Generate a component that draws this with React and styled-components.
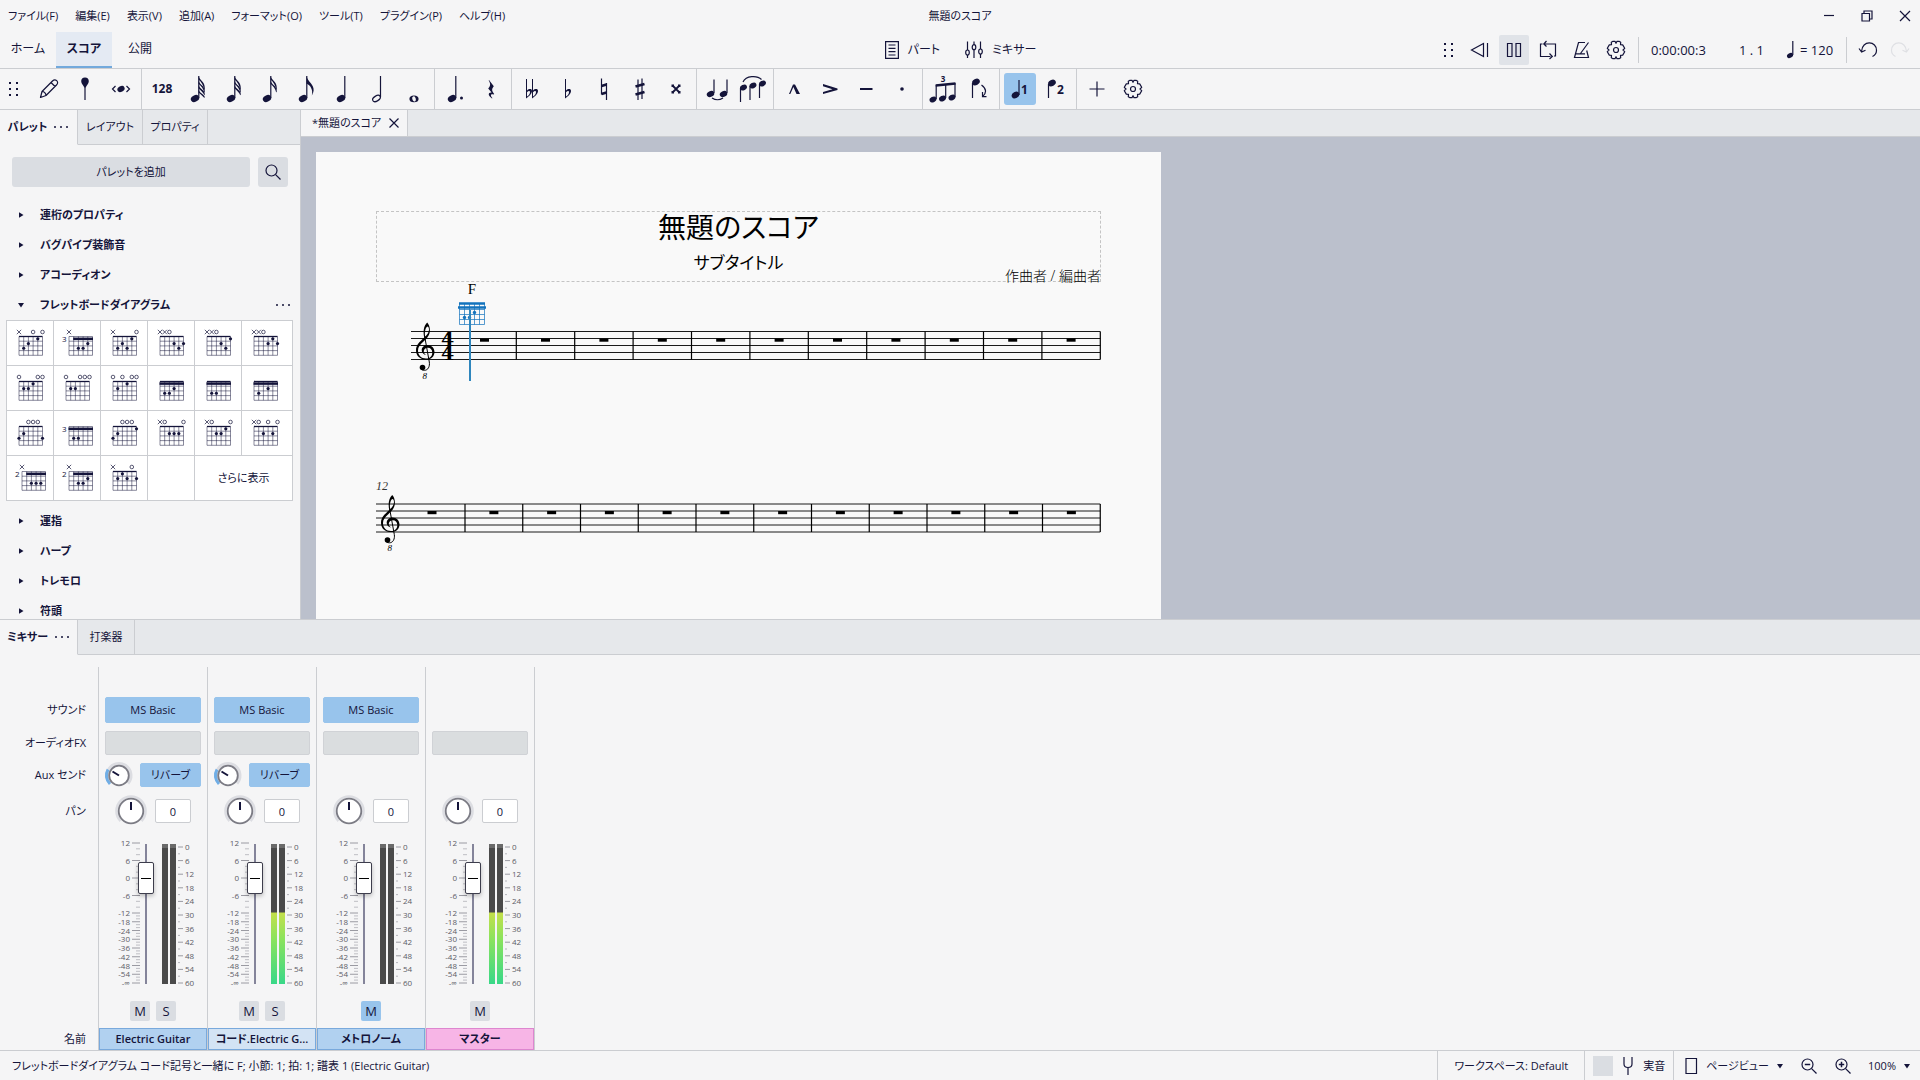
import React from 'react';
import styled, { createGlobalStyle, css } from 'styled-components';

const ink = '#14143a';
const line = '#cbcdd1';
const panel = '#f5f5f6';
const strip = '#e6e8eb';
const control = '#dadde2';
const accent = '#98c4ec';

const GlobalStyle = createGlobalStyle`
  * {
    box-sizing: border-box;
  }

  body {
    margin: 0;
    background: ${panel};
    color: ${ink};
    font-family: 'Open Sans', 'Noto Sans CJK JP', sans-serif;
    font-size: 11px;
    line-height: 16px;
    font-feature-settings: 'palt';
  }

  button,
  input {
    font: inherit;
    font-feature-settings: inherit;
    color: inherit;
    margin: 0;
    padding: 0;
    border: 0;
    background: none;
  }

  svg {
    display: block;
    flex: none;
    overflow: visible;
  }
`;

/* ---------- icons ---------- */

const Icon = ({ size = 32, width, children, ...rest }) => (
  <svg
    width={width || size}
    height={size}
    viewBox={`0 0 ${width || size} ${size}`}
    fill="none"
    stroke="currentColor"
    strokeWidth="1.2"
    aria-hidden="true"
    {...rest}
  >
    {children}
  </svg>
);

const Head = ({ x, y, rx = 4.4, ry = 3.2 }) => (
  <ellipse cx={x} cy={y} rx={rx} ry={ry} transform={`rotate(-28 ${x} ${y})`} fill="currentColor" stroke="none" />
);

const FlaggedNote = ({ flags }) => (
  <Icon>
    <Head x={13} y={25.5} />
    <path d="M16.8 3V25" />
    {Array.from({ length: flags }, (_, i) => (
      <path
        key={i}
        fill="currentColor"
        stroke="none"
        d={
          flags === 1
            ? 'M16.5 3C17.5 8.5 24.3 11.5 23.6 17.5C23.3 20 22.3 21.5 21.8 22.5C23.2 17.5 21 12.5 16.5 10.5Z'
            : `M16.5 ${3 + i * 4.4}C17.5 ${7.5 + i * 4.4} 23 ${8 + i * 4.4} 22.8 ${15.5 + i * 3}L22.2 ${17 + i * 2.6}C21.5 ${12 + i * 4} 19.5 ${9 + i * 4.4} 16.5 ${6.4 + i * 4.4}Z`
        }
      />
    ))}
  </Icon>
);

const Quarter = () => (
  <Icon>
    <Head x={15} y={25.5} />
    <path d="M18.8 3V25" />
  </Icon>
);

const Half = () => (
  <Icon>
    <ellipse cx="14.5" cy="25.5" rx="4.2" ry="2.5" transform="rotate(-32 14.5 25.5)" />
    <path d="M18.5 3V24" />
  </Icon>
);

const Whole = () => (
  <Icon>
    <path
      fill="currentColor"
      stroke="none"
      fillRule="evenodd"
      d="M16 22.6C19 22.6 20.6 24 20.6 26S19 29.3 16 29.3S11.4 28 11.4 26S13 22.6 16 22.6ZM15.3 23.4C13.9 23.6 14 25.6 14.7 27S16.5 28.8 17.3 28.2S18 25.7 17.3 24.6S16.2 23.2 15.3 23.4Z"
    />
  </Icon>
);

const Dotted = () => (
  <Icon>
    <Head x={13} y={25.5} />
    <path d="M16.8 3V25" />
    <circle cx="22.5" cy="25" r="1.5" fill="currentColor" stroke="none" />
  </Icon>
);

const QuarterRest = () => (
  <Icon>
    <path
      fill="currentColor"
      stroke="none"
      d="M14 7L18.8 13.2C16.5 16 16.6 17.6 19.2 21L18.8 21.5C16 20.4 14.8 22 17.4 25L17 25.5C12.5 22.5 13 19.2 16.6 19.6L13.2 15.4C15.8 12.5 15.6 10.5 13.7 7.4Z"
    />
  </Icon>
);

const flatShape = 'M0 0V19.5C3 17.5 6 14.5 6 12C6 9.5 3 9.5 1 11.5V0ZM1 13.2C2.5 11.5 4 11.6 4 13.2C4 15 2.5 16.5 1 17.6Z';

const Flat = () => (
  <Icon>
    <path transform="translate(13 6)" d={flatShape} fill="currentColor" stroke="none" fillRule="evenodd" />
  </Icon>
);

const DoubleFlat = () => (
  <Icon>
    <path transform="translate(10 6)" d={flatShape} fill="currentColor" stroke="none" fillRule="evenodd" />
    <path transform="translate(16 6)" d={flatShape} fill="currentColor" stroke="none" fillRule="evenodd" />
  </Icon>
);

const Natural = () => (
  <Icon>
    <path d="M13.5 5.500V21.500M18.500 10V27" />
    <path d="M13.500 13L18.500 11.500M13.500 21L18.500 19.500" strokeWidth="2.6" />
  </Icon>
);

const Sharp = () => (
  <Icon>
    <path d="M14 6.500V27M18 5.500V26" />
    <path d="M11.500 13.500L20.500 11M11.500 21.500L20.500 19" strokeWidth="2.6" />
  </Icon>
);

const DoubleSharp = () => (
  <Icon>
    <path d="M12.500 12.500L19.500 19.500M19.500 12.500L12.500 19.500" strokeWidth="1.8" />
    <path
      d="M11.500 11.500h2.500v2.500h-2.500zM18 11.500h2.500v2.500h-2.500zM11.500 18h2.500v2.500h-2.500zM18 18h2.500v2.500h-2.500z"
      fill="currentColor"
      stroke="none"
    />
  </Icon>
);

const Tie = () => (
  <Icon>
    <Head x={9.5} y={21} rx={3.9} ry={2.9} />
    <Head x={22.5} y={21} rx={3.9} ry={2.9} />
    <path d="M13 6.500V20M26 6.500V20M11 25Q16.500 28.500 22 25" />
  </Icon>
);

const Slur = () => (
  <Icon>
    <Head x={6.5} y={14.5} rx={3.6} ry={2.7} />
    <Head x={16} y={12.5} rx={3.6} ry={2.7} />
    <Head x={25.5} y={10.5} rx={3.6} ry={2.7} />
    <path d="M3.500 15V29M13 13V27M22.500 11V25M6 9C9 2.500 20 2 24.500 6.500" />
  </Icon>
);

const Marcato = () => (
  <Icon>
    <path d="M11 21L15 11.500H17L22 21H18.500L15.400 14L12.300 21Z" fill="currentColor" stroke="none" />
  </Icon>
);

const Accent = () => (
  <Icon>
    <path d="M9 11L23.500 15.500V17L9 21V19L18.500 16.200L9 13.200Z" fill="currentColor" stroke="none" />
  </Icon>
);

const Tenuto = () => (
  <Icon>
    <path d="M10 16H22.500" strokeWidth="2" />
  </Icon>
);

const Staccato = () => (
  <Icon>
    <circle cx="16" cy="16" r="1.8" fill="currentColor" stroke="none" />
  </Icon>
);

const Triplet = () => (
  <Icon>
    <Head x={6} y={26.5} rx={3.6} ry={2.7} />
    <Head x={15.5} y={25.5} rx={3.6} ry={2.7} />
    <Head x={25} y={24.5} rx={3.6} ry={2.7} />
    <path d="M9.200 12V26M18.700 11V25M28 10V24" />
    <path d="M8.700 12.500L28.500 10.500" strokeWidth="2.4" />
    <text x="16" y="9" fontSize="8" textAnchor="middle" fill="currentColor" stroke="none">
      3
    </text>
  </Icon>
);

const Flip = () => (
  <Icon>
    <Head x={13} y={9} rx={4} ry={3} />
    <path d="M9.500 10V25M18.500 12C24 16 23.500 20 19.500 23.500M19.500 19V23.700H23.500" />
  </Icon>
);

const VoiceOne = () => (
  <Icon>
    <Head x={11.5} y={22} rx={4} ry={3} />
    <path d="M15 7V22" />
    <text x="17" y="20.5" fontSize="12" fontWeight="700" fill="currentColor" stroke="none">
      1
    </text>
  </Icon>
);

const VoiceTwo = () => (
  <Icon>
    <Head x={12} y={10} rx={4} ry={3} />
    <path d="M8.500 11V25" />
    <text x="17" y="20.5" fontSize="12" fontWeight="700" fill="currentColor" stroke="none">
      2
    </text>
  </Icon>
);

const Grip = () => (
  <Icon size={16} width={12}>
    {[2, 8, 14].map((y) => (
      <path key={y} d={`M1 ${y}h2M8 ${y}h2`} strokeWidth="2" />
    ))}
  </Icon>
);

const Pencil = () => (
  <Icon strokeLinejoin="round">
    <path d="M7.500 24.500L9 18.500L19.500 8C21 6.500 22.500 6.500 23.700 7.700S25 10.500 23.500 12L13 22.500L7.500 24.500ZM9 18.500C11 18.300 13 20.300 13 22.500M18 9.500L22 13.500" />
  </Icon>
);

const Pin = () => (
  <Icon>
    <path
      d="M16 4.500C18.500 4.500 19.800 6 19.800 8.200C19.800 11 17.500 12 16.700 14.500H15.300C14.500 12 12.200 11 12.200 8.200C12.200 6 13.500 4.500 16 4.500Z"
      fill="currentColor"
      stroke="none"
    />
    <path d="M16 12V27" />
  </Icon>
);

const Repitch = () => (
  <Icon>
    <Head x={16} y={16} rx={3.8} ry={2.8} />
    <path d="M10.500 13L7.500 16L10.500 19M21.500 13L24.500 16L21.500 19" />
  </Icon>
);

const Gear = () => (
  <Icon size={20} strokeLinejoin="round">
    <path d="M7 1.300H9L10 3.300L11 1.300H13L14.700 2.300L14.500 4.700L16.700 4.900L18.700 8.300L17 10L18.700 11.700L16.700 15.100L14.500 15.300L14.700 17.700L13 18.700H11L10 16.700L9 18.700H7L5.300 17.700L5.500 15.300L3.300 15.100L1.300 11.700L3 10L1.300 8.300L3.300 4.900L5.500 4.700L5.300 2.300Z" />
    <circle cx="10" cy="10" r="2.5" />
  </Icon>
);

const Plus = () => (
  <Icon>
    <path d="M8.500 16H23.500M16 8.500V23.500" />
  </Icon>
);

const PartsIcon = () => (
  <Icon size={20} width={16}>
    <path d="M1.600 1.600H14.400V18.400H1.600ZM4.500 5H11.500M4.500 8.300H11.500M4.500 11.600H11.500M4.500 15H11.500" />
  </Icon>
);

const MixerIcon = () => (
  <Icon size={20}>
    <path d="M3.500 1.500V10M3.500 15V18M10 1.500V4.500M10 10V18M16.500 1.500V9M16.500 14V18" />
    <ellipse cx="3.5" cy="12.5" rx="1.8" ry="2.5" />
    <ellipse cx="10" cy="7.2" rx="1.8" ry="2.5" />
    <ellipse cx="16.5" cy="11.5" rx="1.8" ry="2.5" />
  </Icon>
);

const Rewind = () => (
  <Icon size={20}>
    <path d="M13.500 3.500V16.500L1.500 10ZM17.500 3V17" />
  </Icon>
);

const Pause = () => (
  <Icon size={20}>
    <path d="M3.500 3.500H8V16.500H3.500ZM12 3.500H16.500V16.500H12Z" />
  </Icon>
);

const Loop = () => (
  <Icon size={20}>
    <path d="M4.500 4H2.500V16.500H12.500M6.500 4H17.500V16H16M8.500 1L5.800 4L8.500 6.500M11.500 13.500L14.300 16.500L11.500 19" />
  </Icon>
);

const Metronome = () => (
  <Icon size={20}>
    <path d="M13 2.500H6.500L2.500 17.500H16.500L14.700 10.500M8.500 13.500L16.500 2.500M3.500 13.800H13" />
  </Icon>
);

const Undo = () => (
  <Icon size={20}>
    <path d="M2.500 11.500C3 -0.500 18 1 17.500 10.500C17.400 13.500 15.500 15.500 13.500 16.500M0 8.500L2.600 12L6.500 10.200" />
  </Icon>
);

const Redo = () => (
  <Icon size={20}>
    <path d="M17.500 11.500C17 -0.500 2 1 2.500 10.500C2.600 13.500 4.500 15.500 6.500 16.500M20 8.500L17.400 12L13.500 10.200" />
  </Icon>
);

const Search = ({ sign }) => (
  <Icon size={18}>
    <circle cx="7.5" cy="7.5" r="5.5" />
    <path d="M11.600 11.600L16.500 16.500" />
    {sign && <path d={sign === '+' ? 'M4.800 7.500h5.400M7.500 4.800v5.400' : 'M4.800 7.500h5.400'} strokeWidth="1.5" />}
  </Icon>
);

const Dots = () => (
  <Icon size={4} width={16}>
    <path d="M1 2h2M7 2h2M13 2h2" strokeWidth="1.6" />
  </Icon>
);

const Caret = ({ open }) => (
  <Icon size={8}>
    <path d={open ? 'M1 2H7L4 6.500Z' : 'M2 1.200L6.500 4L2 6.800Z'} fill="currentColor" stroke="none" />
  </Icon>
);

/* ---------- top bars ---------- */

const Window = styled.div`
  display: flex;
  flex-direction: column;
  height: 100vh;
  overflow: hidden;
`;

const ThreeColumns = styled.div`
  display: grid;
  grid-template-columns: 1fr auto 1fr;
  align-items: center;
`;

const TitleBar = styled(ThreeColumns)`
  height: 32px;
`;

const MenuBar = styled.nav`
  display: flex;
  gap: 17px;
  padding-left: 8px;
`;

const WindowButtons = styled.div`
  display: flex;
  justify-content: flex-end;
  gap: 22px;
  padding-right: 7px;
`;

const MainBar = styled(ThreeColumns)`
  height: 37px;
  border-bottom: 1px solid ${line};
`;

const PageTabs = styled.nav`
  display: flex;
  align-self: stretch;
  font-size: 12px;
`;

const PageTab = styled.button`
  width: 56px;
  border-bottom: 2px solid ${(p) => (p.$active ? '#72a9dc' : 'transparent')};
  background: ${(p) => (p.$active ? '#e4eaf3' : 'none')};
  font-weight: ${(p) => (p.$active ? 700 : 400)};
`;

const CenterTools = styled.div`
  display: flex;
  gap: 24px;
  font-size: 12px;
`;

const LabelledTool = styled.button`
  display: flex;
  align-items: center;
  gap: 8px;
`;

const Playback = styled.div`
  display: flex;
  align-items: center;
  justify-content: flex-end;
  padding-right: 6px;
  font-size: 13px;
`;

const PlayButtons = styled.div`
  display: flex;
  gap: ${(p) => p.$gap || 0}px;
`;

const PlayButton = styled.button`
  display: grid;
  place-items: center;
  width: ${(p) => (p.$narrow ? 24 : 30)}px;
  height: 30px;
  border-radius: 2px;
  background: ${(p) => (p.$active ? '#e0e3e8' : 'none')};

  &:disabled {
    color: #dfe0e4;
  }
`;

const Rule = styled.i`
  width: 1px;
  height: 26px;
  margin: 0 7px;
  background: ${line};
`;

const Readout = styled.span`
  min-width: ${(p) => p.$width}px;
  padding-left: 5px;
  white-space: nowrap;
`;

const Tempo = styled.span`
  display: flex;
  align-items: center;
  gap: 4px;
  min-width: 57px;
  padding-left: 4px;
`;

const NoteBar = styled.div`
  display: flex;
  align-items: center;
  height: 41px;
  padding-left: 8px;
  border-bottom: 1px solid ${line};
`;

const NoteGroups = styled.div`
  display: flex;
  margin-left: 9px;
`;

const NoteGroup = styled.div`
  display: flex;
  align-items: center;
  gap: 4px;
  height: 40px;
  padding: 0 4px;

  & + & {
    border-left: 1px solid ${line};
  }
`;

const NoteButton = styled.button`
  display: grid;
  place-items: center;
  width: 32px;
  height: 32px;
  border-radius: 3px;
  font-size: 12px;
  font-weight: 700;
  background: ${(p) => (p.$active ? accent : 'none')};
`;

/* ---------- panels ---------- */

const Workspace = styled.div`
  display: flex;
  flex: 1;
  min-height: 0;
`;

const Side = styled.aside`
  display: flex;
  flex-direction: column;
  flex: none;
  width: 301px;
  overflow: hidden;
  border-right: 1px solid ${line};
`;

const Tabs = styled.div`
  display: flex;
  flex: none;
  height: 35px;
  background: ${strip};
`;

const TabFill = styled.div`
  flex: 1;
  border-bottom: 1px solid ${line};
`;

const Tab = styled.button`
  display: flex;
  align-items: center;
  justify-content: center;
  gap: 6px;
  padding: 0 7px;
  min-width: ${(p) => p.$width}px;
  white-space: nowrap;
  border-right: 1px solid ${line};
  border-bottom: 1px solid ${line};
  ${(p) =>
    p.$active &&
    css`
      background: ${panel};
      border-bottom-color: ${panel};
      font-weight: 700;
    `}
`;

const PaletteTools = styled.div`
  display: flex;
  gap: 8px;
  padding: 12px 12px 13px;
`;

const SoftButton = styled.button`
  display: grid;
  place-items: center;
  flex: ${(p) => (p.$grow ? 1 : 'none')};
  width: 30px;
  height: 30px;
  border-radius: 3px;
  background: ${control};
`;

const PaletteList = styled.ul`
  margin: 0;
  padding: 0;
  list-style: none;
`;

const PaletteRow = styled.button`
  display: flex;
  align-items: center;
  width: 100%;
  height: 30px;
  padding: 0 9px 0 17px;
  gap: 15px;
  font-weight: 700;

  span {
    flex: 1;
    text-align: left;
  }
`;

const ChordGrid = styled.div`
  display: grid;
  grid-template-columns: repeat(5, 46px) 1fr;
  gap: 1px;
  margin: 0 7px 5px 6px;
  border: 1px solid ${line};
  background: ${line};
`;

const ChordCell = styled.button`
  display: grid;
  place-items: center ${(p) => (p.$span ? 'center' : 'start')};
  height: 44px;
  padding-left: ${(p) => (p.$span ? 0 : 4)}px;
  background: #fff;
  grid-column: span ${(p) => p.$span || 1};
`;

const DocumentArea = styled.main`
  display: flex;
  flex-direction: column;
  flex: 1;
  min-width: 0;
`;

const DocumentTabs = styled.div`
  display: flex;
  flex: none;
  height: 27px;
  background: ${strip};
  border-bottom: 1px solid ${line};
`;

const DocumentTab = styled.button`
  display: flex;
  align-items: center;
  gap: 7px;
  padding: 0 7px 0 11px;
  background: ${panel};
  border-right: 1px solid ${line};
`;

const Canvas = styled.div`
  flex: 1;
  overflow: hidden;
  padding: 15px 15px 0;
  background: #bbc0cc;
`;

const Page = styled.article`
  width: 845px;
  min-height: 1200px;
  padding: 59px 60px;
  background: #f9f9f9;
  color: #000;
`;

const TitleFrame = styled.header`
  position: relative;
  height: 71px;
  outline: 1px dashed #c4c4c4;
  outline-offset: -1px;
  text-align: center;

  h1 {
    margin: 0;
    font-size: 28px;
    line-height: 32px;
    font-weight: 400;
  }

  h2 {
    margin: 0;
    padding-top: 8px;
    font-size: 17px;
    line-height: 24px;
    font-weight: 400;
  }

  p {
    position: absolute;
    right: 0;
    bottom: -4px;
    margin: 0;
    font-size: 14px;
    line-height: 20px;
    font-weight: 300;
  }
`;

const ChordDiagram = ({ chord }) => {
  const { fret, barre, marks = '', dots = [] } = chord;
  const left = fret ? 11 : 8;
  const s = 4.7;
  return (
    <svg width="40" height="28" viewBox="0 0 40 28" fill="none" stroke={ink} aria-hidden="true">
      {[0, 1, 2, 3, 4, 5].map((i) => (
        <path key={i} d={`M${left + i * s} 7.500v18.800`} strokeWidth="0.5" />
      ))}
      {[0, 1, 2, 3, 4].map((i) => (
        <path key={i} d={`M${left} ${7.5 + i * s}h${5 * s}`} strokeWidth={i === 0 && !fret ? 1.3 : 0.5} />
      ))}
      {barre !== undefined && (
        <path d={`M${left + barre * s - 0.5} ${fret ? 9.8 : 9.6}H${left + 5 * s + 0.5}`} strokeWidth="2.5" />
      )}
      {[...marks].map((m, i) => {
        const x = left + i * s;
        if (m === 'x') return <path key={i} d={`M${x - 2.2} 0.800l4.400 4.400m0 -4.400l-4.400 4.400`} strokeWidth="0.7" />;
        if (m === 'o') return <circle key={i} cx={x} cy="3" r="1.8" strokeWidth="0.7" />;
        return null;
      })}
      {dots.map(([string, f]) => (
        <circle key={`${string}-${f}`} cx={left + string * s} cy={7.5 + (f - 0.5) * s} r="1.6" fill={ink} stroke="none" />
      ))}
      {fret && (
        <text x="4" y="12.5" fontSize="8" fill={ink} stroke="none">
          {fret}
        </text>
      )}
    </svg>
  );
};

const chords = [
  { marks: 'x--o-o', dots: [[4, 1], [2, 2], [1, 3]] },
  { marks: 'x', fret: 3, barre: 1, dots: [[4, 2], [2, 3], [3, 3]] },
  { marks: 'x----o', dots: [[4, 1], [2, 2], [1, 3], [3, 3]] },
  { marks: 'xxo', dots: [[3, 2], [5, 2], [4, 3]] },
  { marks: 'xxo', dots: [[5, 1], [3, 2], [4, 3]] },
  { marks: 'xxo', dots: [[4, 1], [3, 2], [5, 2]] },
  { marks: 'o---oo', dots: [[3, 1], [1, 2], [2, 2]] },
  { marks: 'o--ooo', dots: [[1, 2], [2, 2]] },
  { marks: 'o-o-oo', dots: [[3, 1], [1, 2]] },
  { barre: 0, dots: [[3, 2], [1, 3], [2, 3]] },
  { barre: 0, dots: [[1, 3], [2, 3]] },
  { barre: 0, dots: [[3, 2], [1, 3]] },
  { marks: '--ooo', dots: [[0, 3], [1, 2], [5, 3]] },
  { fret: 3, barre: 0, dots: [[1, 3], [2, 3]] },
  { marks: '--ooo', dots: [[5, 1], [1, 2], [0, 3]] },
  { marks: 'xo---o', dots: [[2, 2], [3, 2], [4, 2]] },
  { marks: 'xo---o', dots: [[4, 1], [2, 2], [3, 2]] },
  { marks: 'xo-o-o', dots: [[2, 2], [4, 2]] },
  { marks: 'x', fret: 2, barre: 1, dots: [[2, 3], [3, 3], [4, 3]] },
  { marks: 'x', fret: 2, barre: 1, dots: [[4, 2], [2, 3], [3, 3]] },
  { marks: 'x---o', dots: [[2, 1], [1, 2], [3, 2], [5, 2]] },
];

const Palette = ({ label, open, children }) => (
  <li>
    <PaletteRow aria-expanded={!!open}>
      <Caret open={open} />
      <span>{label}</span>
      {open && <Dots />}
    </PaletteRow>
    {children}
  </li>
);

/* ---------- score ---------- */

const Clef = ({ x, y }) => (
  <g transform={`translate(${x} ${y})`} fill="none" stroke="#000">
    <path
      fill="#000"
      stroke="none"
      d="M8.300 14.500C7 9 7.500 3 11.200 -0.500C12.700 1 14 4 13.900 7.500C13.800 12 11 15.500 7.500 18.500C4 21.700 2 24 2 27.500C2 32 5 35.500 10 35.500C13.500 35.500 16.300 33.500 16.300 29.700C16.300 26.500 14.200 24.700 12 24.700C9 24.700 7.200 27 8 29.500C8.300 30.600 9.200 31.500 10.300 32C7.500 31.600 5.600 29.500 5.700 27C5.800 24 8.300 21.900 11.500 21.900C15.500 21.900 18.500 25 18.500 29C18.500 33.500 15 36.600 10.200 36.600C4 36.600 0 32.700 0 27.200C0 22 3.500 19 8.300 14.500ZM9.200 13.600C11.500 11.500 13 9 13 6.500C13 4.300 12.200 3.400 11.500 3.400C9.500 3.800 8.300 9.500 9.200 13.600Z"
    />
    <path d="M8.700 13.500L13.300 39C14 43.500 12 47.300 8.500 47.300C6.500 47.300 5 46.500 4.600 45" strokeWidth="1" />
    <circle cx="6.5" cy="44.5" r="2.8" fill="#000" stroke="none" />
    <text x="6.5" y="55.5" fontSize="9" fontStyle="italic" fontFamily="'Liberation Serif', serif" fill="#000" stroke="none">
      8
    </text>
  </g>
);

const Staff = ({ x, y, firstBar, step, bars, firstRest }) => {
  const right = firstBar + step * (bars - 1);
  return (
    <g stroke="#000">
      {[0, 1, 2, 3, 4].map((i) => (
        <path key={i} d={`M${x} ${y + i * 7}H${right}`} strokeWidth="0.9" />
      ))}
      {Array.from({ length: bars }, (_, i) => {
        const bar = firstBar + i * step;
        const rest = i === 0 ? firstRest : bar - step / 2;
        return (
          <React.Fragment key={i}>
            <path d={`M${bar} ${y}v28`} strokeWidth="1.2" />
            <rect x={rest - 4.5} y={y + 7} width="9" height="3.2" fill="#000" stroke="none" />
          </React.Fragment>
        );
      })}
      <Clef x={x + 5} y={y - 8.5} />
    </g>
  );
};

const ScoreDrawing = () => (
  <svg width="725" height="280" viewBox="0 0 725 280" aria-hidden="true">
    <Staff x={35} y={49.5} firstBar={140.3} step={58.4} bars={11} firstRest={108.5} />
    <g fontFamily="'DejaVu Serif', serif" fontWeight="700" fontSize="19" textAnchor="middle">
      <text x="71.5" y="63.5">4</text>
      <text x="71.5" y="77.5">4</text>
    </g>
    <text x="96" y="12" fontSize="15" fontFamily="'Liberation Serif', serif" textAnchor="middle">
      F
    </text>
    <g stroke="#1273bd" fill="none">
      {[0, 1, 2, 3, 4, 5].map((i) => (
        <path key={i} d={`M${83.5 + i * 5} 22v20.500`} strokeWidth="0.7" />
      ))}
      {[0, 1, 2, 3].map((i) => (
        <path key={i} d={`M83.500 ${27.5 + i * 5}h25`} strokeWidth="0.7" />
      ))}
      <path d="M83 21.500h26M82 25.500h28" strokeWidth="2.4" />
      <g fill="#1273bd" stroke="none">
        <circle cx="98.5" cy="30.5" r="1.7" />
        <circle cx="88.5" cy="35.5" r="1.7" />
        <circle cx="93.5" cy="35.5" r="1.7" />
      </g>
    </g>
    <path d="M94 28V99" stroke="#2f86bd" strokeWidth="2" />
    <text x="0" y="208" fontSize="12" fontStyle="italic" fontFamily="'Liberation Serif', serif" fill="#333">
      12
    </text>
    <Staff x={0} y={222} firstBar={89} step={57.75} bars={12} firstRest={56} />
  </svg>
);

/* ---------- mixer ---------- */

const MixerPanel = styled.section`
  flex: none;
  border-top: 1px solid ${line};
`;

const Channels = styled.div`
  display: flex;
  padding-top: 12px;
  border-bottom: 1px solid ${line};
`;

const Channel = styled.div`
  width: ${(p) => (p.$labels ? 99 : 109)}px;
  border-right: 1px solid ${line};
`;

const ChannelStrip = styled.div`
  display: grid;
  grid-template-rows: 26px 24px 24px 32px 158px 20px;
  row-gap: 8px;
  padding: 30px ${(p) => (p.$labels ? 12 : 6)}px 7px;
  align-items: center;
  text-align: ${(p) => (p.$labels ? 'right' : 'center')};
  white-space: nowrap;
`;

const ChannelName = styled.div`
  height: 22px;
  padding: 0 ${(p) => (p.$tone ? 4 : 11)}px;
  overflow: hidden;
  text-overflow: ellipsis;
  white-space: nowrap;
  line-height: 20px;
  font-weight: ${(p) => (p.$tone ? 600 : 400)};
  text-align: ${(p) => (p.$tone ? 'center' : 'right')};
  border: 1px solid ${(p) => (p.$tone ? p.$tone[1] : 'transparent')};
  background: ${(p) => (p.$tone ? p.$tone[0] : 'none')};
`;

const Slot = styled.button`
  width: 100%;
  height: 100%;
  border-radius: 2px;
  border: 1px solid ${(p) => (p.$filled ? accent : '#d0d2d6')};
  background: ${(p) => (p.$filled ? accent : '#dadddf')};
`;

const AuxRow = styled.div`
  display: grid;
  grid-template: 24px / 27px 61px;
  justify-content: space-between;
  align-items: center;
`;

const PanRow = styled.div`
  display: flex;
  align-items: center;
  justify-content: center;
  gap: 8px;
`;

const PanInput = styled.input`
  width: 36px;
  height: 24px;
  border: 1px solid ${line};
  border-radius: 2px;
  background: #fff;
  text-align: center;
`;

const FaderRow = styled.div`
  display: flex;
  align-items: center;
  padding-left: 9px;
`;

const Fader = styled.input.attrs({ type: 'range', min: 0, max: 100 })`
  appearance: none;
  writing-mode: vertical-lr;
  direction: rtl;
  width: 16px;
  height: 140px;
  margin: 0 8px 0 -2px;
  background: linear-gradient(#84849a, #84849a) center / 2px 100% no-repeat;

  &::-webkit-slider-thumb {
    appearance: none;
    width: 16px;
    height: 32px;
    border: 1px solid #3d3d4c;
    border-radius: 2px;
    background: linear-gradient(#000, #000) center / 10px 1px no-repeat #fff;
    box-shadow: 0 2px 4px rgb(0 0 0 / 25%);
  }
`;

const Meter = styled.div`
  width: 6px;
  height: 140px;
  margin-right: 2px;
  border-top: 4px solid #6a6a6a;
  background: ${(p) =>
    p.$live ? 'linear-gradient(#4a4a4a 64px, #c3df4b 65px, #8de35c 90px, #38d888)' : '#4a4a4a'};
`;

const MuteSolo = styled.div`
  display: flex;
  justify-content: center;
  gap: 6px;
`;

const LetterButton = styled.button`
  width: 20px;
  height: 20px;
  border-radius: 2px;
  font-size: 13px;
  background: ${(p) => (p.$active ? accent : control)};
`;

const KnobButton = styled.button`
  display: block;
`;

const AuxKnob = () => (
  <KnobButton aria-label="Aux">
    <svg width="28" height="28" viewBox="0 0 28 28" fill="none">
      <path d="M5 22.500A12 12 0 1 1 23 22.500" stroke="#dcdde2" strokeWidth="3" />
      <path d="M5 23A12 12 0 0 1 3 8.500" stroke="#70aee6" strokeWidth="3" />
      <circle cx="14" cy="14.5" r="9.8" fill="#fff" stroke="#7b7b84" strokeWidth="1.8" />
      <path d="M7.500 10.500L14 14.500" stroke={ink} strokeWidth="2" />
    </svg>
  </KnobButton>
);

const PanKnob = () => (
  <KnobButton aria-label="Pan">
    <svg width="32" height="32" viewBox="0 0 32 32" fill="none">
      <path d="M5.500 26A14.500 14.500 0 1 1 26.500 26" stroke="#dcdde2" strokeWidth="2.6" />
      <circle cx="16" cy="16" r="12.3" fill="#fff" stroke="#7b7b84" strokeWidth="1.8" />
      <path d="M16 7V15" stroke={ink} strokeWidth="2" />
    </svg>
  </KnobButton>
);

const faderMarks = ['12', '6', '0', '-6', '-12', '-18', '-24', '-30', '-36', '-42', '-48', '-54', '-∞'];
const faderY = (i) => 8 + (i <= 4 ? i * 17.5 : 70 + (i - 4) * 8.75);

const FaderScale = () => (
  <svg width="26" height="158" viewBox="0 0 26 158" fontSize="8" fill="#5c5c66" stroke="#9a9aa2" aria-hidden="true">
    {faderMarks.map((label, i) => {
      const y = faderY(i);
      const gap = faderY(i + 1) - y;
      return (
        <g key={label}>
          <text x="16" y={y + 3} textAnchor="end" stroke="none">
            {label}
          </text>
          <path d={`M18 ${y}h8`} />
          {i < 12 && <path d={`M22 ${y + gap / 3}h4M22 ${y + (gap * 2) / 3}h4`} strokeWidth="0.6" />}
        </g>
      );
    })}
  </svg>
);

const MeterScale = () => (
  <svg width="20" height="158" viewBox="0 0 20 158" fontSize="8" fill="#5c5c66" stroke="#9a9aa2" aria-hidden="true">
    {Array.from({ length: 11 }, (_, i) => {
      const y = 12 + i * 13.6;
      return (
        <g key={i}>
          <path d={`M0 ${y}h5`} />
          {i < 10 && <path d={`M0 ${y + 6.8}h2`} strokeWidth="0.7" />}
          <text x="7" y={y + 3} stroke="none">
            {i * 6}
          </text>
        </g>
      );
    })}
  </svg>
);

const tones = {
  blue: ['#b1d1f0', '#79a9dc'],
  pale: ['#d3e3f4', '#79a9dc'],
  pink: ['#f7b5e6', '#dd86cf'],
};

const channels = [
  { name: 'Electric Guitar', tone: 'blue', sound: 'MS Basic', aux: true, solo: true },
  { name: 'コード.Electric G...', tone: 'pale', sound: 'MS Basic', aux: true, solo: true, live: true },
  { name: 'メトロノーム', tone: 'blue', sound: 'MS Basic', muted: true },
  { name: 'マスター', tone: 'pink', live: true },
];

const MixerChannel = ({ name, tone, sound, aux, solo, live, muted }) => (
  <Channel>
    <ChannelStrip>
      {sound ? <Slot $filled>{sound}</Slot> : <span />}
      <Slot aria-label="FX" />
      {aux ? (
        <AuxRow>
          <AuxKnob />
          <Slot $filled>リバーブ</Slot>
        </AuxRow>
      ) : (
        <span />
      )}
      <PanRow>
        <PanKnob />
        <PanInput defaultValue="0" aria-label="パン" />
      </PanRow>
      <FaderRow>
        <FaderScale />
        <Fader defaultValue={83} aria-label={name} />
        <Meter $live={live} />
        <Meter $live={live} />
        <MeterScale />
      </FaderRow>
      <MuteSolo>
        <LetterButton $active={muted}>M</LetterButton>
        {solo && <LetterButton>S</LetterButton>}
      </MuteSolo>
    </ChannelStrip>
    <ChannelName $tone={tones[tone]}>{name}</ChannelName>
  </Channel>
);

/* ---------- status bar ---------- */

const StatusBar = styled.footer`
  display: flex;
  flex: none;
  align-items: center;
  height: 29px;
  padding-left: 12px;
`;

const StatusItem = styled.div`
  display: flex;
  align-items: center;
  height: 29px;
  gap: ${(p) => p.$gap || 8}px;
  padding: 0 ${(p) => p.$pad}px;
  border-left: 1px solid ${line};

  &:first-of-type {
    margin-left: auto;
  }
`;

const StatusButton = styled.button`
  display: flex;
  align-items: center;
  gap: 7px;
`;

const Swatch = styled.span`
  width: 20px;
  height: 20px;
  background: ${control};
`;

const menus = ['ファイル(F)', '編集(E)', '表示(V)', '追加(A)', 'フォーマット(O)', 'ツール(T)', 'プラグイン(P)', 'ヘルプ(H)'];

const noteGroups = [
  [Pencil, Pin, Repitch],
  ['128', 4, 3, 2, 1, Quarter, Half, Whole],
  [Dotted, QuarterRest],
  [DoubleFlat, Flat, Natural, Sharp, DoubleSharp],
  [Tie, Slur],
  [Marcato, Accent, Tenuto, Staccato],
  [Triplet, Flip],
  [VoiceOne, VoiceTwo],
  [Plus, Gear],
];

const renderTool = (Tool) => {
  if (typeof Tool === 'string') return Tool;
  if (typeof Tool === 'number') return <FlaggedNote flags={Tool} />;
  return <Tool />;
};

const App = () => (
  <Window>
    <GlobalStyle />
    <TitleBar>
      <MenuBar>
        {menus.map((m) => (
          <button key={m}>{m}</button>
        ))}
      </MenuBar>
      <span>無題のスコア</span>
      <WindowButtons>
        <button aria-label="最小化">
          <Icon size={16}>
            <path d="M3 7.500H13" />
          </Icon>
        </button>
        <button aria-label="元に戻す">
          <Icon size={16}>
            <path d="M3 5.500H10.500V13H3ZM5 5.500V3H13V11H10.500" />
          </Icon>
        </button>
        <button aria-label="閉じる">
          <Icon size={16}>
            <path d="M3 3L13 13M13 3L3 13" />
          </Icon>
        </button>
      </WindowButtons>
    </TitleBar>

    <MainBar>
      <PageTabs>
        <PageTab>ホーム</PageTab>
        <PageTab $active>スコア</PageTab>
        <PageTab>公開</PageTab>
      </PageTabs>
      <CenterTools>
        <LabelledTool>
          <PartsIcon />
          パート
        </LabelledTool>
        <LabelledTool>
          <MixerIcon />
          ミキサー
        </LabelledTool>
      </CenterTools>
      <Playback>
        <PlayButtons $gap={4}>
          <PlayButton $narrow aria-label="移動"><Grip /></PlayButton>
          <PlayButton aria-label="先頭へ"><Rewind /></PlayButton>
          <PlayButton $active aria-label="一時停止"><Pause /></PlayButton>
          <PlayButton aria-label="ループ"><Loop /></PlayButton>
          <PlayButton aria-label="メトロノーム"><Metronome /></PlayButton>
          <PlayButton aria-label="再生設定"><Gear /></PlayButton>
        </PlayButtons>
        <Rule />
        <Readout $width={88}>0:00:00:3</Readout>
        <Readout $width={48}>1 . 1</Readout>
        <Tempo>
          <Icon size={18} width={10}>
            <Head x={4} y={14.5} rx={3.2} ry={2.3} />
            <path d="M6.800 0V14" />
          </Icon>
          = 120
        </Tempo>
        <Rule />
        <PlayButtons>
          <PlayButton aria-label="元に戻す"><Undo /></PlayButton>
          <PlayButton disabled aria-label="やり直す"><Redo /></PlayButton>
        </PlayButtons>
      </Playback>
    </MainBar>

    <NoteBar>
      <Grip />
      <NoteGroups>
        {noteGroups.map((group, g) => (
          <NoteGroup key={g}>
            {group.map((tool, i) => (
              <NoteButton key={i} $active={tool === VoiceOne}>
                {renderTool(tool)}
              </NoteButton>
            ))}
          </NoteGroup>
        ))}
      </NoteGroups>
    </NoteBar>

    <Workspace>
      <Side>
        <Tabs>
          <Tab $active $width={78}>
            パレット <Dots />
          </Tab>
          <Tab $width={65}>レイアウト</Tab>
          <Tab $width={65}>プロパティ</Tab>
          <TabFill />
        </Tabs>
        <PaletteTools>
          <SoftButton $grow>パレットを追加</SoftButton>
          <SoftButton aria-label="検索"><Search /></SoftButton>
        </PaletteTools>
        <PaletteList>
          <Palette label="連桁のプロパティ" />
          <Palette label="バグパイプ装飾音" />
          <Palette label="アコーディオン" />
          <Palette label="フレットボードダイアグラム" open>
            <ChordGrid>
              {chords.map((chord, i) => (
                <ChordCell key={i} aria-label={`コード ${i + 1}`}>
                  <ChordDiagram chord={chord} />
                </ChordCell>
              ))}
              <ChordCell as="div" />
              <ChordCell $span={2}>さらに表示</ChordCell>
            </ChordGrid>
          </Palette>
          <Palette label="運指" />
          <Palette label="ハープ" />
          <Palette label="トレモロ" />
          <Palette label="符頭" />
        </PaletteList>
      </Side>
      <DocumentArea>
        <DocumentTabs>
          <DocumentTab>
            *無題のスコア
            <Icon size={12}>
              <path d="M1.500 1.500L10.500 10.500M10.500 1.500L1.500 10.500" />
            </Icon>
          </DocumentTab>
        </DocumentTabs>
        <Canvas>
          <Page>
            <TitleFrame>
              <h1>無題のスコア</h1>
              <h2>サブタイトル</h2>
              <p>作曲者 / 編曲者</p>
            </TitleFrame>
            <ScoreDrawing />
          </Page>
        </Canvas>
      </DocumentArea>
    </Workspace>

    <MixerPanel>
      <Tabs>
        <Tab $active $width={78}>
          ミキサー <Dots />
        </Tab>
        <Tab $width={57}>打楽器</Tab>
        <TabFill />
      </Tabs>
      <Channels>
        <Channel $labels>
          <ChannelStrip $labels>
            <span>サウンド</span>
            <span>オーディオFX</span>
            <span>Aux センド</span>
            <span>パン</span>
          </ChannelStrip>
          <ChannelName>名前</ChannelName>
        </Channel>
        {channels.map((channel) => (
          <MixerChannel key={channel.name} {...channel} />
        ))}
      </Channels>
    </MixerPanel>

    <StatusBar>
      <span>フレットボードダイアグラム コード記号と一緒に F; 小節: 1; 拍: 1; 譜表 1 (Electric Guitar)</span>
      <StatusItem $pad={16}>ワークスペース: Default</StatusItem>
      <StatusItem $pad={8}>
        <Swatch />
        <Icon size={20} width={14}>
          <path d="M3 1V8C3 10.500 4.500 11.500 7 11.500S11 10.500 11 8V1M7 11.500V19" />
        </Icon>
        実音
      </StatusItem>
      <StatusItem $pad={9} $gap={16}>
        <StatusButton>
          <Icon size={18} width={16}>
            <path d="M3 1.500H13.500V16.500H3Z" />
          </Icon>
          ページビュー
          <Caret open />
        </StatusButton>
        <StatusButton aria-label="縮小"><Search sign="-" /></StatusButton>
        <StatusButton aria-label="拡大"><Search sign="+" /></StatusButton>
        <StatusButton>
          100%
          <Caret open />
        </StatusButton>
      </StatusItem>
    </StatusBar>
  </Window>
);

export default App;
